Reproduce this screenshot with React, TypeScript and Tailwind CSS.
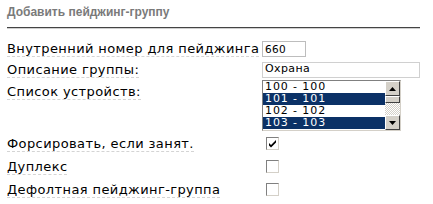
import React from "react";

type Device = { id: string; label: string; selected: boolean };

const devices: Device[] = [
  { id: "100", label: "100 - 100", selected: false },
  { id: "101", label: "101 - 101", selected: true },
  { id: "102", label: "102 - 102", selected: false },
  { id: "103", label: "103 - 103", selected: true },
];

function Label({ children }: { children: React.ReactNode }) {
  return (
    <span className="border-b border-dashed border-[#d4d4d4] leading-[15px] tracking-[0.4px]">
      {children}
    </span>
  );
}

function Check({ checked }: { checked?: boolean }) {
  return (
    <span className="ml-[4px] flex h-[13px] w-[13px] items-center justify-center border border-t-[#808080] border-l-[#808080] border-r-[#d4d0c8] border-b-[#d4d0c8] bg-white">
      {checked && (
        <svg width="9" height="9" viewBox="0 0 9 9">
          <path d="M1 4 L3 6 L8 1 L8 3.5 L3 8.5 L1 6.5 Z" fill="#000" />
        </svg>
      )}
    </span>
  );
}

function ScrollBtn({ down }: { down?: boolean }) {
  return (
    <div className="flex h-[15px] w-[15px] items-center justify-center border border-t-white border-l-white border-r-[#404040] border-b-[#404040] bg-[#d4d0c8]">
      <svg width="7" height="4" viewBox="0 0 7 4">
        <path d={down ? "M0 0 L7 0 L3.5 4 Z" : "M0 4 L7 4 L3.5 0 Z"} fill="#000" />
      </svg>
    </div>
  );
}

export default function App() {
  return (
    <div className="h-[204px] w-[433px] bg-white font-['DejaVu_Sans',Verdana,sans-serif] text-[13px] text-black">
      <div className="px-[7px] pt-[5px]">
        <h2 className="font-['Liberation_Sans',Arial,sans-serif] text-[12px] font-bold text-[#7a7a7a] leading-[14px]">
          Добавить пейджинг-группу
        </h2>
        <div className="mt-[8px] h-[2px] w-[413px] border-t border-[#444] border-b-[#cfcfcf] border-b" />
      </div>

      <div className="mt-[9px] flex flex-col px-[7px]">
        <div className="flex h-[21px] items-center">
          <div className="w-[255px]">
            <Label>Внутренний номер для пейджинга</Label>
          </div>
          <input
            defaultValue="660"
            className="h-[16px] w-[44px] border border-[#bdbdbd] px-[2px] text-[10.5px] tracking-[0.3px] outline-none"
          />
        </div>
        <div className="flex h-[21px] items-center">
          <div className="w-[255px]">
            <Label>Описание группы:</Label>
          </div>
          <input
            defaultValue="Охрана"
            className="h-[16px] w-[158px] border border-[#d0d0d0] px-[2px] text-[11px] tracking-[0.4px] outline-none"
          />
        </div>
        <div className="flex items-start">
          <div className="w-[255px] pt-[2px]">
            <Label>Список устройств:</Label>
          </div>
          <div className="flex h-[51px] w-[139px] border border-t-[#808080] border-l-[#808080] border-r-[#d4d0c8] border-b-[#d4d0c8] bg-white">
            <div className="flex-1 text-[11px] leading-[12px] tracking-[0.9px]">
              {devices.map((d) => (
                <div
                  key={d.id}
                  className={
                    d.selected
                      ? "h-[12px] bg-[#0b3166] pl-[2px] text-white"
                      : "h-[12px] pl-[2px] text-black"
                  }
                >
                  {d.label}
                </div>
              ))}
            </div>
            <div className="flex w-[15px] flex-col">
              <ScrollBtn />
              <div className="h-[7px] border border-t-white border-l-white border-r-[#404040] border-b-[#404040] bg-[#d4d0c8]" />
              <div className="flex-1 bg-[repeating-conic-gradient(#d4d0c8_0_25%,#ffffff_0_50%)] bg-[length:2px_2px]" />
              <ScrollBtn down />
            </div>
          </div>
        </div>

        <div className="mt-[1px] flex h-[23px] items-center">
          <div className="w-[255px]">
            <Label>Форсировать, если занят.</Label>
          </div>
          <Check checked />
        </div>
        <div className="flex h-[23px] items-center">
          <div className="w-[255px]">
            <Label>Дуплекс</Label>
          </div>
          <Check />
        </div>
        <div className="flex h-[23px] items-center">
          <div className="w-[255px]">
            <Label>Дефолтная пейджинг-группа</Label>
          </div>
          <Check />
        </div>
      </div>
    </div>
  );
}
